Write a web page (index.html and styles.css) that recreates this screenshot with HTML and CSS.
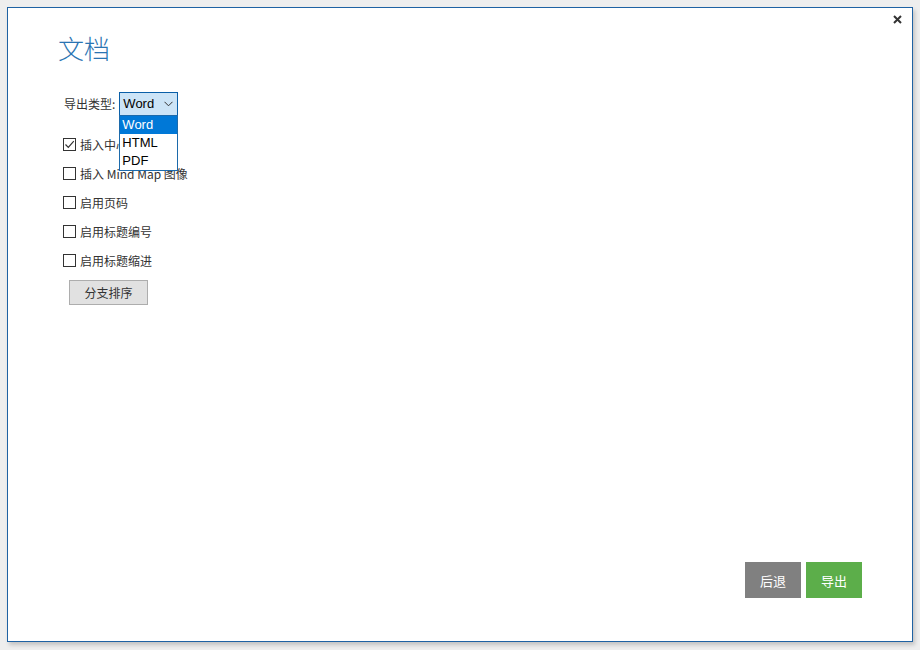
FILE: index.html
```html
<!DOCTYPE html>
<html>
<head>
<meta charset="utf-8">
<link rel="stylesheet" href="styles.css">
</head>
<body>
<div class="backdrop">
  <div class="dialog">
    <div class="close"><svg width="9" height="9" viewBox="0 0 9 9"><path d="M1 1 L8 8 M8 1 L1 8" stroke="#333" stroke-width="2" fill="none"/></svg></div>
    <h1 class="title">文档</h1>
    <div class="type-row">
      <span class="type-label">导出类型:</span>
      <div class="select-wrap">
        <div class="select">
          <span>Word</span>
          <svg class="chev" width="9" height="6" viewBox="0 0 9 6"><path d="M0.5 0.8 L4.5 4.8 L8.5 0.8" fill="none" stroke="#333" stroke-width="1"/></svg>
        </div>
        <ul class="menu">
          <li class="active">Word</li>
          <li>HTML</li>
          <li>PDF</li>
        </ul>
      </div>
    </div>
    <div class="options">
      <label class="opt"><span class="box checked"><svg width="11" height="11" viewBox="0 0 11 11"><path d="M1.5 5.5 L4.3 8.3 L9.8 2.2" fill="none" stroke="#333" stroke-width="1.2"/></svg></span>插入中心主题</label>
      <label class="opt"><span class="box"></span>插入 Mind Map 图像</label>
      <label class="opt"><span class="box"></span>启用页码</label>
      <label class="opt"><span class="box"></span>启用标题编号</label>
      <label class="opt"><span class="box"></span>启用标题缩进</label>
    </div>
    <button class="sort">分支排序</button>
    <div class="actions">
      <button class="btn back">后退</button>
      <button class="btn export">导出</button>
    </div>
  </div>
</div>
</body>
</html>
```
FILE: styles.css
```css
html, body {
  margin: 0;
  padding: 0;
}
body {
  width: 920px;
  height: 650px;
  background: #eeeeee;
  font-family: "Noto Sans CJK SC", "Liberation Sans", sans-serif;
  overflow: hidden;
}
.backdrop {
  padding: 7px 0 0 7px;
}
.dialog {
  position: relative;
  box-sizing: border-box;
  width: 906px;
  height: 635px;
  background: #ffffff;
  border: 1px solid #1f62a3;
  box-shadow: 2px 3px 4px rgba(0,0,0,0.18);
  padding: 22px 50px 43px 52px;
  display: flex;
  flex-direction: column;
}
.close {
  position: absolute;
  top: 7px;
  right: 10px;
  width: 9px;
  height: 9px;
  line-height: 0;
}
.title {
  margin: 0 0 0 -2px;
  font-size: 26px;
  font-weight: 300;
  color: #2a74b2;
  line-height: 36px;
  height: 36px;
}
.type-row {
  margin-top: 26px;
  margin-left: 4px;
  display: flex;
  align-items: center;
  height: 23px;
}
.type-label {
  font-size: 12px;
  color: #333;
  margin-right: 4px;
}
.select-wrap {
  position: relative;
}
.select {
  box-sizing: border-box;
  width: 59px;
  height: 24px;
  border: 1px solid #0a5fa8;
  background: #cce4f7;
  display: flex;
  align-items: center;
  justify-content: space-between;
  padding: 0 4px 0 3px;
  font-family: "Liberation Sans", sans-serif;
  font-size: 13px;
  color: #000;
}
.chev {
  margin-top: 1px;
}
.menu {
  position: absolute;
  left: 0;
  top: 23px;
  box-sizing: border-box;
  width: 59px;
  margin: 0;
  padding: 0;
  list-style: none;
  background: #fff;
  border: 1px solid #1c6aab;
  font-family: "Liberation Sans", sans-serif;
  font-size: 13px;
  color: #000;
  z-index: 5;
}
.menu li {
  height: 18px;
  line-height: 18px;
  padding-left: 2px;
}
.menu li.active {
  background: #0078d7;
  color: #fff;
}
.options {
  margin-top: 19px;
  display: flex;
  flex-direction: column;
  gap: 9px;
}
.opt {
  display: flex;
  align-items: center;
  height: 20px;
  font-size: 12px;
  color: #333;
  margin-left: 3px;
}
.box {
  box-sizing: border-box;
  width: 13px;
  height: 13px;
  border: 1px solid #333;
  background: #fff;
  margin-right: 4px;
  display: flex;
  align-items: center;
  justify-content: center;
}
.sort {
  align-self: flex-start;
  margin-top: 10px;
  margin-left: 9px;
  width: 79px;
  height: 25px;
  background: #e1e1e1;
  border: 1px solid #adadad;
  font-family: "Noto Sans CJK SC", sans-serif;
  font-size: 12px;
  color: #333;
  padding: 0;
}
.actions {
  margin-top: auto;
  display: flex;
  justify-content: flex-end;
  gap: 5px;
}
.btn {
  width: 56px;
  height: 36px;
  border: none;
  color: #fff;
  font-family: "Noto Sans CJK SC", sans-serif;
  font-size: 13px;
  padding: 0;
}
.back {
  background: #808080;
}
.export {
  background: #5cae4a;
}
```
